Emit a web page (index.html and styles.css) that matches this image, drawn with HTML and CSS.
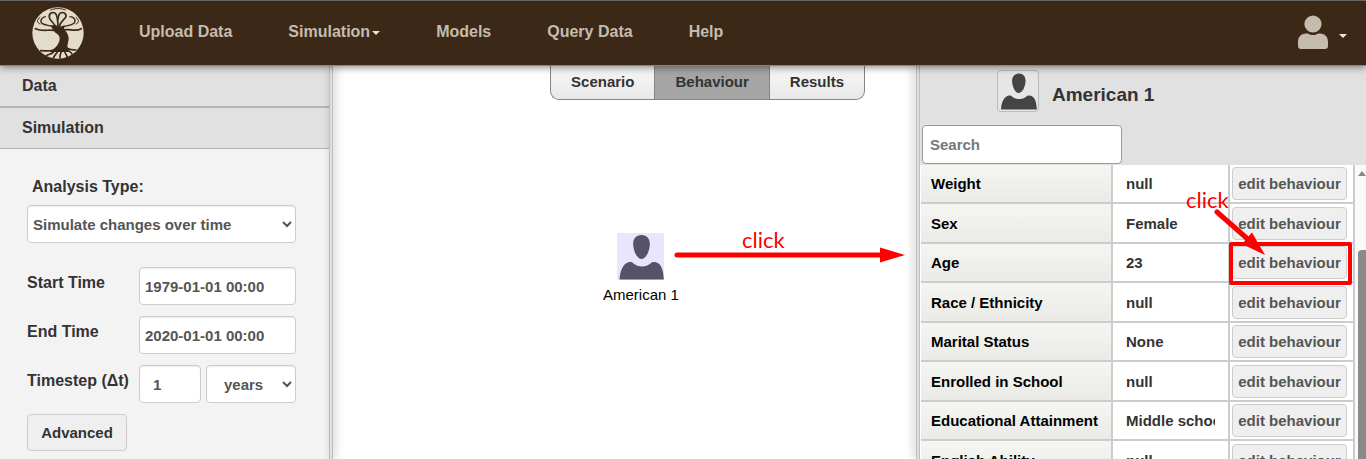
FILE: index.html
```html
<!DOCTYPE html>
<html lang="en">
<head>
    <meta charset="UTF-8">
    <meta name="viewport" content="width=device-width, initial-scale=1.0">
    <title>Behaviour - American 1</title>
    <link rel="stylesheet" href="styles.css">
</head>
<body>
    <svg class="defs" aria-hidden="true">
        <symbol id="person" viewBox="0 0 47 47">
            <path d="M24.500 2C30.500 2 33.500 6.500 32.700 13C32 19.500 28.500 26 24.500 26C20.500 26 17 19.500 16.300 13C15.500 6.500 18.500 2 24.500 2Z"/>
            <path d="M2.500 46.500C3 38 6 31 11 29.500C13.500 28.800 15 29 16.500 30.500C21 34.500 29 34.500 33.500 30.500C35 29 37 28.800 39.500 29.500C44.500 31 46.500 38 46.800 46.500Z"/>
        </symbol>
    </svg>

    <header class="navbar">
        <a href="#" class="logo" aria-label="Home">
            <svg width="52" height="52" viewBox="24 21 156 156" fill="none" stroke="#3c2817" stroke-linecap="round">
                <circle cx="102" cy="99" r="77" fill="#e3dccb" stroke="none"/>
                <path d="M78 76C86 84 86 94 100 102C114 112 106 134 88 148L76 156L136 156C126 144 132 132 134 118C135 104 126 94 120 86L122 76L108 80L96 76Z" fill="#3c2817" stroke="none"/>
                <path d="M100 92C96 70 78 65 76 52C74 40 86 34 94 40C101 46 101 60 102 76" stroke-width="5"/>
                <path d="M106 82C106 66 120 62 126 50C128 40 116 34 108 40C102 45 104 52 101 60" stroke-width="5"/>
                <path d="M98 86C82 74 66 78 54 70C46 62 54 52 64 50" stroke-width="4"/>
                <path d="M112 86C120 74 138 80 150 70C158 60 148 50 138 50" stroke-width="4"/>
                <path d="M102 94C80 84 60 98 34 86M112 92C134 82 150 98 172 86" stroke-width="5"/>
                <path d="M48 72C38 68 38 60 48 52M156 72C166 68 166 60 156 52M80 30C94 24 112 24 124 30" stroke-width="3"/>
                <path d="M100 146C84 156 66 152 50 152M92 152C84 164 74 162 68 166M102 152C100 160 90 166 88 174M112 150C112 160 106 166 108 174M120 148C122 160 128 164 130 172M126 146C136 156 142 156 144 162M128 144C138 150 148 150 156 150" stroke-width="5"/>
            </svg>
        </a>
        <nav class="menu">
            <a href="#">Upload Data</a>
            <a href="#">Simulation<span class="caret"></span></a>
            <a href="#">Models</a>
            <a href="#">Query Data</a>
            <a href="#">Help</a>
        </nav>
        <button type="button" class="user" aria-label="Account">
            <svg width="30" height="34" viewBox="0 0 30 34">
                <circle cx="15" cy="9" r="8.600"/>
                <path d="M0 31V27C0 22 3 18.500 8 18.500H10C13 20.500 17 20.500 20 18.500H22C27 18.500 30 22 30 27V31Q30 34 27 34H3Q0 34 0 31Z"/>
            </svg>
            <span class="caret"></span>
        </button>
    </header>

    <div class="content">
        <aside class="sidebar">
            <button type="button" class="section">Data</button>
            <button type="button" class="section open">Simulation</button>
            <form class="settings">
                <label for="analysis" class="analysis-label">Analysis Type:</label>
                <select id="analysis" class="control">
                    <option>Simulate changes over time</option>
                </select>
                <div class="field first">
                    <label for="start">Start Time</label>
                    <input type="text" id="start" class="control" value="1979-01-01 00:00">
                </div>
                <div class="field">
                    <label for="end">End Time</label>
                    <input type="text" id="end" class="control" value="2020-01-01 00:00">
                </div>
                <div class="field">
                    <label for="step">Timestep (Δt)</label>
                    <input type="text" id="step" class="control step" value="1">
                    <select class="control unit" aria-label="Timestep unit">
                        <option>years</option>
                    </select>
                </div>
                <button type="button" class="advanced">Advanced</button>
            </form>
        </aside>
        <div class="divider"></div>

        <main class="canvas">
            <div class="tabs">
                <button type="button">Scenario</button>
                <button type="button" class="active">Behaviour</button>
                <button type="button">Results</button>
            </div>
            <div class="node">
                <svg width="47" height="47"><use href="#person"/></svg>
                <span>American 1</span>
            </div>
            <div class="hint hint-node">
                <span>click</span>
                <svg width="232" height="16" viewBox="0 0 232 16">
                    <path d="M3 8H210" stroke="#f00" stroke-width="5" stroke-linecap="round"/>
                    <path d="M206 0.500L231 8L206 15.500Z" fill="#f00"/>
                </svg>
            </div>
        </main>
        <div class="divider right"></div>

        <aside class="details">
            <div class="details-head">
                <span class="avatar"><svg width="38" height="38"><use href="#person"/></svg></span>
                <h2>American 1</h2>
            </div>
            <input type="search" class="search" placeholder="Search" aria-label="Search">
            <div class="list">
                <table>
                    <colgroup>
                        <col class="col-name">
                        <col class="col-value">
                        <col>
                    </colgroup>
                    <tbody>
                        <tr><th scope="row">Weight</th><td>null</td><td class="action"><button type="button">edit behaviour</button></td></tr>
                        <tr><th scope="row">Sex</th><td>Female</td><td class="action"><button type="button">edit behaviour</button></td></tr>
                        <tr><th scope="row">Age</th><td>23</td><td class="action marked"><button type="button">edit behaviour</button></td></tr>
                        <tr><th scope="row">Race / Ethnicity</th><td>null</td><td class="action"><button type="button">edit behaviour</button></td></tr>
                        <tr><th scope="row">Marital Status</th><td>None</td><td class="action"><button type="button">edit behaviour</button></td></tr>
                        <tr><th scope="row">Enrolled in School</th><td>null</td><td class="action"><button type="button">edit behaviour</button></td></tr>
                        <tr><th scope="row">Educational Attainment</th><td><div class="value">Middle school</div></td><td class="action"><button type="button">edit behaviour</button></td></tr>
                        <tr><th scope="row">English Ability</th><td>null</td><td class="action"><button type="button">edit behaviour</button></td></tr>
                    </tbody>
                </table>
                <div class="scrollbar">
                    <span class="arrow-up"></span>
                    <span class="thumb"></span>
                </div>
                <div class="hint hint-edit">
                    <span>click</span>
                    <svg width="52" height="48" viewBox="0 0 52 48">
                        <path d="M3 3L36 32" stroke="#f00" stroke-width="5" stroke-linecap="round"/>
                        <path d="M51 46L28 35L38 23.500Z" fill="#f00"/>
                    </svg>
                </div>
            </div>
        </aside>
    </div>
</body>
</html>
```
FILE: styles.css
```css
* {
    box-sizing: border-box;
}
body {
    margin: 0;
    height: 100vh;
    display: flex;
    flex-direction: column;
    overflow: hidden;
    background: #fff;
    color: #333;
    font-family: "Liberation Sans", Arial, sans-serif;
    font-size: 15px;
    font-weight: bold;
}
button, input, select {
    font: inherit;
    color: inherit;
}
.defs {
    display: none;
}

/* top bar */
.navbar {
    display: flex;
    align-items: center;
    flex: none;
    height: 66px;
    padding: 0 19px 0 32px;
    background: #3c2817;
    border-top: 1px solid #6b6661;
    border-bottom: 1px solid #8c8279;
    box-shadow: 0 1px 8px rgba(0, 0, 0, 0.5);
    position: relative;
    z-index: 2;
}
.logo svg {
    display: block;
}
.menu {
    display: flex;
    flex: 1;
    gap: 56px;
    padding: 0 0 2px 55px;
}
.menu a {
    color: #c5bcae;
    font-size: 16px;
    text-decoration: none;
}
.caret {
    display: inline-block;
    border: 4px solid transparent;
    border-top-color: #e8e2d8;
    border-bottom: 0;
    margin-left: 2px;
    vertical-align: middle;
}
.user {
    display: flex;
    align-items: center;
    gap: 9px;
    padding: 0 0 3px;
    border: 0;
    background: none;
}
.user svg {
    fill: #c5bcae;
}
.user .caret {
    margin-top: 8px;
}

.content {
    display: flex;
    flex: 1;
    min-height: 0;
}
.divider {
    flex: none;
    width: 4px;
    background: #e0e0e0;
    border: 1px solid #bcbcbc;
    border-width: 0 1px;
    box-shadow: 2px 0 8px rgba(0, 0, 0, 0.25);
}
.divider.right {
    box-shadow: -2px 0 8px rgba(0, 0, 0, 0.25);
}

/* left panel */
.sidebar {
    flex: none;
    width: 329px;
    background: #f3f3f3;
}
.section {
    display: block;
    width: 100%;
    height: 42px;
    padding: 0 22px;
    border: 0;
    border-bottom: 2px solid #b4b4b4;
    background: #e1e1e1;
    font-size: 16px;
    text-align: left;
}
.section.open {
    height: 41px;
    border-bottom-width: 1px;
}
.settings {
    padding: 28px 33px 0 27px;
}
.settings label {
    font-size: 16px;
}
.analysis-label {
    display: block;
    padding-left: 5px;
    margin-bottom: 9px;
    line-height: 19px;
}
.control {
    width: 100%;
    height: 38px;
    padding: 0 5px;
    border: 1px solid #ccc;
    border-radius: 4px;
    background: #fff;
    color: #555;
    box-shadow: inset 0 1px 1px rgba(0, 0, 0, 0.08);
}
select.control {
    padding: 0 1px;
}
.field {
    display: flex;
    gap: 5px;
    margin-bottom: 11px;
}
.field.first {
    margin-top: 24px;
}
.field label {
    flex: none;
    width: 107px;
    padding-top: 7px;
    white-space: nowrap;
}
.field .control {
    min-width: 0;
    flex: 1;
}
.field .step {
    flex: none;
    width: 62px;
    padding: 0 13px;
}
.field .unit {
    padding-left: 13px;
}
.advanced {
    width: 100px;
    height: 37px;
    padding: 0;
    border: 1px solid #ccc;
    border-radius: 4px;
    background: #efefef;
}

/* scenario canvas */
.canvas {
    flex: 1;
    min-width: 0;
    position: relative;
}
.tabs {
    display: flex;
    justify-content: flex-end;
    padding-right: 51px;
}
.tabs button {
    height: 34px;
    padding: 0 20px 2px;
    border: 1px solid #858585;
    border-width: 0 0 1px 1px;
    background: linear-gradient(#f8f8f8, #e8e8e8);
}
.tabs button:first-child {
    border-bottom-left-radius: 9px;
}
.tabs button:last-child {
    border-right-width: 1px;
    border-bottom-right-radius: 9px;
}
.tabs .active {
    background: #a5a5a5;
}
.node {
    position: absolute;
    left: 270px;
    top: 167px;
    display: flex;
    flex-direction: column;
    align-items: center;
    gap: 6px;
    color: #000;
    font-weight: normal;
}
.node svg {
    background: #e9e5ff;
    fill: #565269;
}
.hint {
    position: absolute;
    color: #f00;
    font: 22px/24px Lato, sans-serif;
    pointer-events: none;
}
.hint svg {
    display: block;
}
.hint-node {
    left: 341px;
    top: 162px;
}
.hint-node span {
    display: block;
    padding-left: 68px;
    margin-bottom: -5px;
}

/* right panel */
.details {
    flex: none;
    display: flex;
    flex-direction: column;
    width: 446px;
    background: #e1e1e1;
}
.details-head {
    display: flex;
    align-items: center;
    gap: 13px;
    padding: 4px 0 0 77px;
}
.avatar {
    display: flex;
    align-items: center;
    justify-content: center;
    width: 42px;
    height: 42px;
    border: 1px solid #bbb;
    border-radius: 4px;
    background: #e6e6e6;
    fill: #444;
}
h2 {
    margin: 8px 0 0;
    font-size: 19px;
}
.search {
    flex: none;
    width: 200px;
    height: 39px;
    margin: 13px 0 1px 2px;
    padding: 0 7px;
    border: 1px solid #999;
    border-radius: 4px;
    background: #fff;
}
.search::placeholder {
    color: #777;
}
.list {
    display: flex;
    align-items: flex-start;
    flex: 1;
    min-height: 0;
    padding-left: 1px;
    background: #fff;
    position: relative;
    overflow: hidden;
}
table {
    width: 100%;
    border-collapse: separate;
    border-spacing: 0;
    table-layout: fixed;
}
.col-name {
    width: 192px;
}
.col-value {
    width: 117px;
}
tr {
    height: 39px;
}
tr:nth-child(even) {
    height: 40px;
}
th, td {
    padding: 0 10px;
    border: 2px solid #ccc;
    border-top: 0;
    border-left: 0;
    text-align: left;
}
th {
    background: linear-gradient(#f5f5f2, #eaeae6);
    color: #000;
    white-space: nowrap;
}
td {
    padding: 0 13px;
}
.value {
    overflow: hidden;
    white-space: nowrap;
}
.action {
    padding: 0 2px;
    position: relative;
}
.action button {
    display: block;
    width: 115px;
    height: 33px;
    padding: 0;
    border: 1px solid #ccc;
    border-radius: 4px;
    background: #efefef;
    color: #555;
    white-space: nowrap;
}
.marked::after {
    content: "";
    position: absolute;
    inset: -2px 1px -4px -1px;
    border: 4px solid #f00;
    border-radius: 2px;
    z-index: 1;
}
.scrollbar {
    display: flex;
    flex-direction: column;
    align-items: flex-end;
    align-self: stretch;
    flex: none;
    width: 11px;
    padding-top: 6px;
    background: #fafafa;
}
.arrow-up {
    border: 4px solid transparent;
    border-bottom: 5px solid #888;
    border-top: 0;
}
.thumb {
    flex: 1;
    width: 8px;
    margin-top: 74px;
    border-radius: 4px 0 0 0;
    background: #8a8a8a;
}
.hint-edit {
    left: 266px;
    top: 23px;
    z-index: 2;
}
.hint-edit svg {
    margin: -3px 0 0 28px;
}
```
